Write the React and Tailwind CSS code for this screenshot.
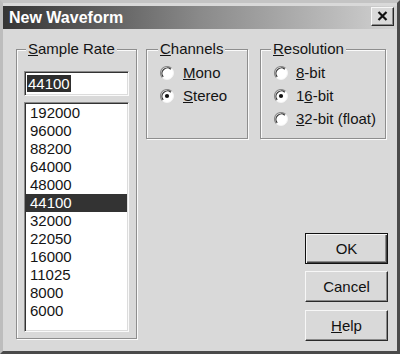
const rates = ['192000', '96000', '88200', '64000', '48000', '44100', '32000', '22050', '16000', '11025', '8000', '6000'];

function Radio({ checked }) {
  return (
    <svg width="14" height="14" viewBox="0 0 14 14" className="shrink-0">
      <circle cx="7" cy="7" r="6.5" fill="#ffffff" />
      <path d="M2.4 11.6 A6.5 6.5 0 0 1 11.6 2.4" fill="none" stroke="#8a8a8a" strokeWidth="1.2" />
      <path d="M3.2 10.8 A5.4 5.4 0 0 1 10.8 3.2" fill="none" stroke="#303030" strokeWidth="1.2" />
      <path d="M11.6 2.4 A6.5 6.5 0 0 1 2.4 11.6" fill="none" stroke="#f4f4f4" strokeWidth="1" />
      {checked && <circle cx="7" cy="7" r="2.1" fill="#111111" />}
    </svg>
  );
}

function Option({ checked, children, gap }) {
  return (
    <div className={`flex h-[23px] items-center ${gap}`}>
      <Radio checked={checked} />
      <span className="leading-none">{children}</span>
    </div>
  );
}

function Group({ label, className, children }) {
  return (
    <fieldset
      className={`m-0 border border-[#8e8e8e] py-0 pr-0 shadow-[inset_1px_1px_0_#fafafa,1px_1px_0_#fafafa] ${className}`}
    >
      <legend className="ml-[2px] bg-[#d9d9d9] px-[2px] leading-[18px]">{label}</legend>
      {children}
    </fieldset>
  );
}

function Button({ children, isDefault }) {
  return (
    <button
      className={`h-[31px] w-[83px] bg-[#d9d9d9] leading-none text-[#111] ${
        isDefault
          ? 'border border-[#111] shadow-[inset_1px_1px_0_#f7f7f7,inset_-1px_-1px_0_#404040,inset_-2px_-2px_0_#8a8a8a]'
          : 'border border-t-[#f7f7f7] border-l-[#f7f7f7] border-r-[#2a2a2a] border-b-[#2a2a2a] shadow-[inset_-1px_-1px_0_#8a8a8a]'
      }`}
    >
      {children}
    </button>
  );
}

export default function App() {
  return (
    <div className="h-[354px] w-[400px] overflow-hidden border-[3px] border-t-[#c4c4c4] border-l-[#bdbdbd] border-r-[#4a4a4a] border-b-[#4a4a4a] bg-[#d9d9d9] font-['Liberation_Sans',Arial,sans-serif] text-[15px] text-[#141414]">
      <div className="mt-[3px] flex h-[23px] items-center justify-between bg-gradient-to-r from-[#363636] via-[#8a8a8a] to-[#d2d2d2] pl-[6px] pr-[3px]">
        <span className="text-[16px] font-bold leading-none text-white">New Waveform</span>
        <div className="-mt-[3px] flex h-[19px] w-[23px] items-center justify-center border border-t-[#f7f7f7] border-l-[#f7f7f7] border-r-[#2a2a2a] border-b-[#2a2a2a] bg-[#d9d9d9] shadow-[inset_-1px_-1px_0_#8a8a8a]">
          <svg width="11" height="10" viewBox="0 0 11 10">
            <path d="M1.5 1 L9.5 9 M9.5 1 L1.5 9" stroke="#111" strokeWidth="2.2" />
          </svg>
        </div>
      </div>

      <div className="mt-[11px] flex pl-[13px] pr-[9px]">
        <Group
          className="h-[299px] w-[121px] pl-[7px]"
          label={
            <>
              <u>S</u>ample Rate
            </>
          }
        >
          <div className="mt-[13px] flex h-[25px] w-[105px] items-center border border-t-[#8a8a8a] border-l-[#8a8a8a] border-r-[#fafafa] border-b-[#fafafa] bg-white pl-[2px] shadow-[inset_1px_1px_0_#333,inset_-1px_-1px_0_#dcdcdc]">
            <span className="bg-[#2e2e2e] px-[1px] leading-[17px] text-white">44100</span>
          </div>
          <div className="mt-[6px] h-[230px] w-[105px] border border-t-[#8a8a8a] border-l-[#8a8a8a] border-r-[#fafafa] border-b-[#fafafa] bg-white p-[1px] shadow-[inset_1px_1px_0_#333,inset_-1px_-1px_0_#dcdcdc]">
            <ul>
              {rates.map((r) => (
                <li
                  key={r}
                  className={`h-[18px] pl-[4px] leading-[18px] ${r === '44100' ? 'bg-[#333] text-white' : ''}`}
                >
                  {r}
                </li>
              ))}
            </ul>
          </div>
        </Group>

        <div className="ml-[9px] flex flex-1 flex-col">
          <div className="flex">
            <Group
              className="h-[99px] w-[102px] pl-[9px]"
              label={
                <>
                  <u>C</u>hannels
                </>
              }
            >
              <div className="ml-[4px] mt-[3px]">
                <Option gap="gap-[9px]">
                  <span>
                    <u>M</u>ono
                  </span>
                </Option>
                <Option checked gap="gap-[9px]">
                  <span>
                    <u>S</u>tereo
                  </span>
                </Option>
              </div>
            </Group>
            <Group
              className="ml-[12px] h-[99px] w-[126px] pl-[8px]"
              label={
                <>
                  <u>R</u>esolution
                </>
              }
            >
              <div className="ml-[5px] mt-[3px]">
                <Option gap="gap-[8px]">
                  <span>
                    <u>8</u>-bit
                  </span>
                </Option>
                <Option checked gap="gap-[8px]">
                  <span>
                    1<u>6</u>-bit
                  </span>
                </Option>
                <Option gap="gap-[8px]">
                  <span>
                    <u>3</u>2-bit (float)
                  </span>
                </Option>
              </div>
            </Group>
          </div>

          <div className="mt-[94px] flex flex-col items-end gap-[7px]">
            <Button isDefault>OK</Button>
            <Button>Cancel</Button>
            <div className="mt-[1px]">
              <Button>
                <u>H</u>elp
              </Button>
            </div>
          </div>
        </div>
      </div>
    </div>
  );
}
